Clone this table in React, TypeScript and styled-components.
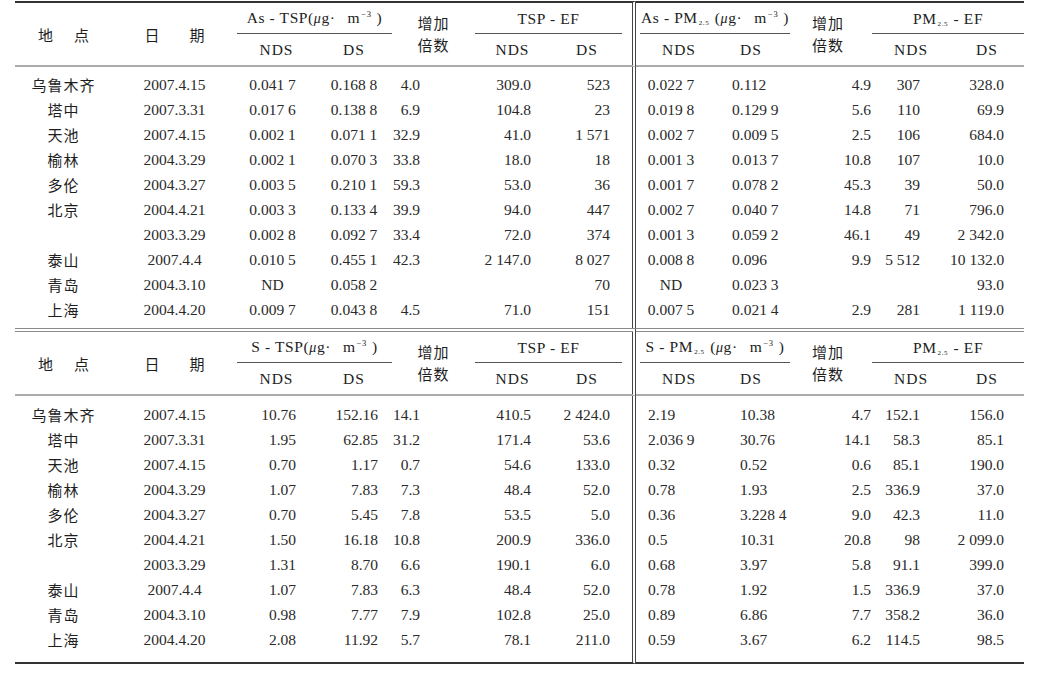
import React from 'react';
import styled, { createGlobalStyle, css } from 'styled-components';

const GlobalStyle = createGlobalStyle`
  html, body { margin: 0; padding: 0; background: #ffffff; }
  body {
    font-family: "Liberation Serif", "Noto Sans CJK SC", serif;
    color: #2a2a2a;
  }
`;

type Align = 'left' | 'right' | 'center';
interface ColSpec { align: Align; pl?: number; pr?: number }

const widths = [97, 125, 79, 76, 83, 75, 86, 86, 68, 82, 78, 74];
const DIVIDER_COL = 6;

const sec1Cols: ColSpec[] = [
  { align: 'center' }, { align: 'center' },
  { align: 'center', pr: 8 }, { align: 'center' }, { align: 'right', pr: 55 },
  { align: 'right', pr: 19 }, { align: 'right', pr: 22 },
  { align: 'center', pr: 16 }, { align: 'left', pl: 10 }, { align: 'right', pr: 1 },
  { align: 'right', pr: 30 }, { align: 'right', pr: 20 },
];

const sec2Cols: ColSpec[] = [
  { align: 'center' }, { align: 'center' },
  { align: 'right', pr: 20 }, { align: 'right', pr: 14 }, { align: 'right', pr: 55 },
  { align: 'right', pr: 19 }, { align: 'right', pr: 22 },
  { align: 'left', pl: 12 }, { align: 'left', pl: 18 }, { align: 'right', pr: 1 },
  { align: 'right', pr: 30 }, { align: 'right', pr: 20 },
];

const sec1Rows: string[][] = [
  ['乌鲁木齐', '2007.4.15', '0.041 7', '0.168 8', '4.0', '309.0', '523', '0.022 7', '0.112', '4.9', '307', '328.0'],
  ['塔中', '2007.3.31', '0.017 6', '0.138 8', '6.9', '104.8', '23', '0.019 8', '0.129 9', '5.6', '110', '69.9'],
  ['天池', '2007.4.15', '0.002 1', '0.071 1', '32.9', '41.0', '1 571', '0.002 7', '0.009 5', '2.5', '106', '684.0'],
  ['榆林', '2004.3.29', '0.002 1', '0.070 3', '33.8', '18.0', '18', '0.001 3', '0.013 7', '10.8', '107', '10.0'],
  ['多伦', '2004.3.27', '0.003 5', '0.210 1', '59.3', '53.0', '36', '0.001 7', '0.078 2', '45.3', '39', '50.0'],
  ['北京', '2004.4.21', '0.003 3', '0.133 4', '39.9', '94.0', '447', '0.002 7', '0.040 7', '14.8', '71', '796.0'],
  ['', '2003.3.29', '0.002 8', '0.092 7', '33.4', '72.0', '374', '0.001 3', '0.059 2', '46.1', '49', '2 342.0'],
  ['泰山', '2007.4.4', '0.010 5', '0.455 1', '42.3', '2 147.0', '8 027', '0.008 8', '0.096', '9.9', '5 512', '10 132.0'],
  ['青岛', '2004.3.10', 'ND', '0.058 2', '', '', '70', 'ND', '0.023 3', '', '', '93.0'],
  ['上海', '2004.4.20', '0.009 7', '0.043 8', '4.5', '71.0', '151', '0.007 5', '0.021 4', '2.9', '281', '1 119.0'],
];

const sec2Rows: string[][] = [
  ['乌鲁木齐', '2007.4.15', '10.76', '152.16', '14.1', '410.5', '2 424.0', '2.19', '10.38', '4.7', '152.1', '156.0'],
  ['塔中', '2007.3.31', '1.95', '62.85', '31.2', '171.4', '53.6', '2.036 9', '30.76', '14.1', '58.3', '85.1'],
  ['天池', '2007.4.15', '0.70', '1.17', '0.7', '54.6', '133.0', '0.32', '0.52', '0.6', '85.1', '190.0'],
  ['榆林', '2004.3.29', '1.07', '7.83', '7.3', '48.4', '52.0', '0.78', '1.93', '2.5', '336.9', '37.0'],
  ['多伦', '2004.3.27', '0.70', '5.45', '7.8', '53.5', '5.0', '0.36', '3.228 4', '9.0', '42.3', '11.0'],
  ['北京', '2004.4.21', '1.50', '16.18', '10.8', '200.9', '336.0', '0.5', '10.31', '20.8', '98', '2 099.0'],
  ['', '2003.3.29', '1.31', '8.70', '6.6', '190.1', '6.0', '0.68', '3.97', '5.8', '91.1', '399.0'],
  ['泰山', '2007.4.4', '1.07', '7.83', '6.3', '48.4', '52.0', '0.78', '1.92', '1.5', '336.9', '37.0'],
  ['青岛', '2004.3.10', '0.98', '7.77', '7.9', '102.8', '25.0', '0.89', '6.86', '7.7', '358.2', '36.0'],
  ['上海', '2004.4.20', '2.08', '11.92', '5.7', '78.1', '211.0', '0.59', '3.67', '6.2', '114.5', '98.5'],
];

const Page = styled.div`
  width: 1043px;
  height: 673px;
  box-sizing: border-box;
  padding: 1px 19px 0 15px;
  overflow: hidden;
`;

const Table = styled.table`
  width: 1009px;
  table-layout: fixed;
  border-collapse: separate;
  border-spacing: 0;
`;

type Edge = 'solid' | 'double';

const edgeCss = (edge: Edge) =>
  edge === 'solid'
    ? css`border-top: 2px solid #333;`
    : css`border-top: 4px double #8a8a8a;`;

const cjk = css`
  font-family: "Noto Sans CJK SC", "Noto Sans CJK JP", sans-serif;
  font-weight: 400;
  font-size: 15px;
`;

const LabelCell = styled.th<{ $edge: Edge; $pr?: number }>`
  ${p => edgeCss(p.$edge)}
  border-bottom: 2px solid #acacac;
  vertical-align: middle;
  text-align: center;
  padding: 0 ${p => p.$pr ?? 0}px 0 0;
  color: #1e1e1e;
  ${cjk}
`;

const Spaced = styled.span<{ $gap: number }>`
  letter-spacing: ${p => p.$gap}px;
  margin-right: ${p => -p.$gap}px;
`;

const TwoLine = styled.span`
  display: inline-block;
  line-height: 22px;
  letter-spacing: 1px;
`;

const GroupCell = styled.th<{ $edge: Edge; $divider?: boolean }>`
  ${p => edgeCss(p.$edge)}
  ${p => p.$divider && css`border-right: 4px double #444;`}
  padding: 0;
  vertical-align: bottom;
  font-weight: 400;
`;

const GroupLabel = styled.div<{ $ml?: number; $mr?: number }>`
  margin: 0 ${p => p.$mr ?? 0}px 0 ${p => p.$ml ?? 0}px;
  border-bottom: 1px solid #555;
  line-height: 29px;
  font-size: 15.5px;
  font-weight: 400;
  letter-spacing: 0.6px;
  text-align: center;
  white-space: nowrap;
  color: #222;
`;

const Mu = styled.i`
  font-style: italic;
  font-size: 14px;
`;

const Dot = styled.span`
  margin-right: 12px;
`;

const Sup = styled.sup`
  font-size: 8.5px;
  vertical-align: 6px;
  line-height: 0;
  margin-left: 1px;
`;

const Sub = styled.sub`
  font-size: 7px;
  vertical-align: -2px;
  line-height: 0;
  margin: 0 1px;
`;

const Close = styled.span`
  margin-left: 5px;
`;

const SubHead = styled.th<{ $pr?: number; $divider?: boolean }>`
  border-bottom: 2px solid #acacac;
  ${p => p.$divider && css`border-right: 4px double #444;`}
  padding: 0 ${p => p.$pr ?? 0}px 0 0;
  line-height: 31px;
  font-size: 15.5px;
  font-weight: 400;
  letter-spacing: 1px;
  text-align: center;
  color: #222;
`;

const Cell = styled.td<{
  $align: Align;
  $pl: number;
  $pr: number;
  $divider: boolean;
  $site: boolean;
  $padTop: number;
  $padBottom: number;
  $rule: boolean;
}>`
  text-align: ${p => p.$align};
  padding: ${p => p.$padTop}px ${p => p.$pr}px ${p => p.$padBottom}px ${p => p.$pl}px;
  line-height: 25px;
  font-size: 15.5px;
  white-space: nowrap;
  color: #2a2a2a;
  ${p => p.$divider && css`border-right: 4px double #444;`}
  ${p => p.$rule && css`border-bottom: 2px solid #333;`}
  ${p => p.$site && css`
    ${cjk}
    color: #1e1e1e;
    letter-spacing: 1px;
  `}
`;

interface SectionProps {
  edge: Edge;
  groups: React.ReactNode[];
  rows: string[][];
  cols: ColSpec[];
  padTop: number;
  padBottom: number;
  rule: boolean;
}

const Section: React.FC<SectionProps> = ({ edge, groups, rows, cols, padTop, padBottom, rule }) => (
  <Table>
    <colgroup>
      {widths.map((w, i) => (
        <col key={i} style={{ width: w }} />
      ))}
    </colgroup>
    <thead>
      <tr>
        <LabelCell rowSpan={2} $edge={edge}>
          <Spaced $gap={3}>地　点</Spaced>
        </LabelCell>
        <LabelCell rowSpan={2} $edge={edge}>日　　期</LabelCell>
        <GroupCell colSpan={2} $edge={edge}>
          <GroupLabel>{groups[0]}</GroupLabel>
        </GroupCell>
        <LabelCell rowSpan={2} $edge={edge}>
          <TwoLine>增加<br />倍数</TwoLine>
        </LabelCell>
        <GroupCell colSpan={2} $edge={edge} $divider>
          <GroupLabel $mr={10}>{groups[1]}</GroupLabel>
        </GroupCell>
        <GroupCell colSpan={2} $edge={edge}>
          <GroupLabel $ml={4}>{groups[2]}</GroupLabel>
        </GroupCell>
        <LabelCell rowSpan={2} $edge={edge} $pr={6}>
          <TwoLine>增加<br />倍数</TwoLine>
        </LabelCell>
        <GroupCell colSpan={2} $edge={edge}>
          <GroupLabel>{groups[3]}</GroupLabel>
        </GroupCell>
      </tr>
      <tr>
        <SubHead>NDS</SubHead>
        <SubHead>DS</SubHead>
        <SubHead>NDS</SubHead>
        <SubHead $pr={8} $divider>DS</SubHead>
        <SubHead>NDS</SubHead>
        <SubHead $pr={10}>DS</SubHead>
        <SubHead>NDS</SubHead>
        <SubHead>DS</SubHead>
      </tr>
    </thead>
    <tbody>
      {rows.map((row, r) => (
        <tr key={r}>
          {row.map((v, c) => (
            <Cell
              key={c}
              $align={cols[c].align}
              $pl={cols[c].pl ?? 0}
              $pr={cols[c].pr ?? 0}
              $divider={c === DIVIDER_COL}
              $site={c === 0}
              $padTop={r === 0 ? padTop : 0}
              $padBottom={r === rows.length - 1 ? padBottom : 0}
              $rule={rule && r === rows.length - 1}
            >
              {v}
            </Cell>
          ))}
        </tr>
      ))}
    </tbody>
  </Table>
);

const unit = (
  <>
    <Mu>μ</Mu>g<Dot>·</Dot>m<Sup>−3</Sup><Close>)</Close>
  </>
);

const sec1Groups = [
  <>As - TSP({unit}</>,
  <>TSP - EF</>,
  <>As - PM<Sub>2.5</Sub> ({unit}</>,
  <>PM<Sub>2.5</Sub> - EF</>,
];

const sec2Groups = [
  <>S - TSP({unit}</>,
  <>TSP - EF</>,
  <>S - PM<Sub>2.5</Sub> ({unit}</>,
  <>PM<Sub>2.5</Sub> - EF</>,
];

export default function App() {
  return (
    <>
      <GlobalStyle />
      <Page>
        <Section edge="solid" groups={sec1Groups} rows={sec1Rows} cols={sec1Cols} padTop={5} padBottom={6} rule={false} />
        <Section edge="double" groups={sec2Groups} rows={sec2Rows} cols={sec2Cols} padTop={6} padBottom={10} rule />
      </Page>
    </>
  );
}
